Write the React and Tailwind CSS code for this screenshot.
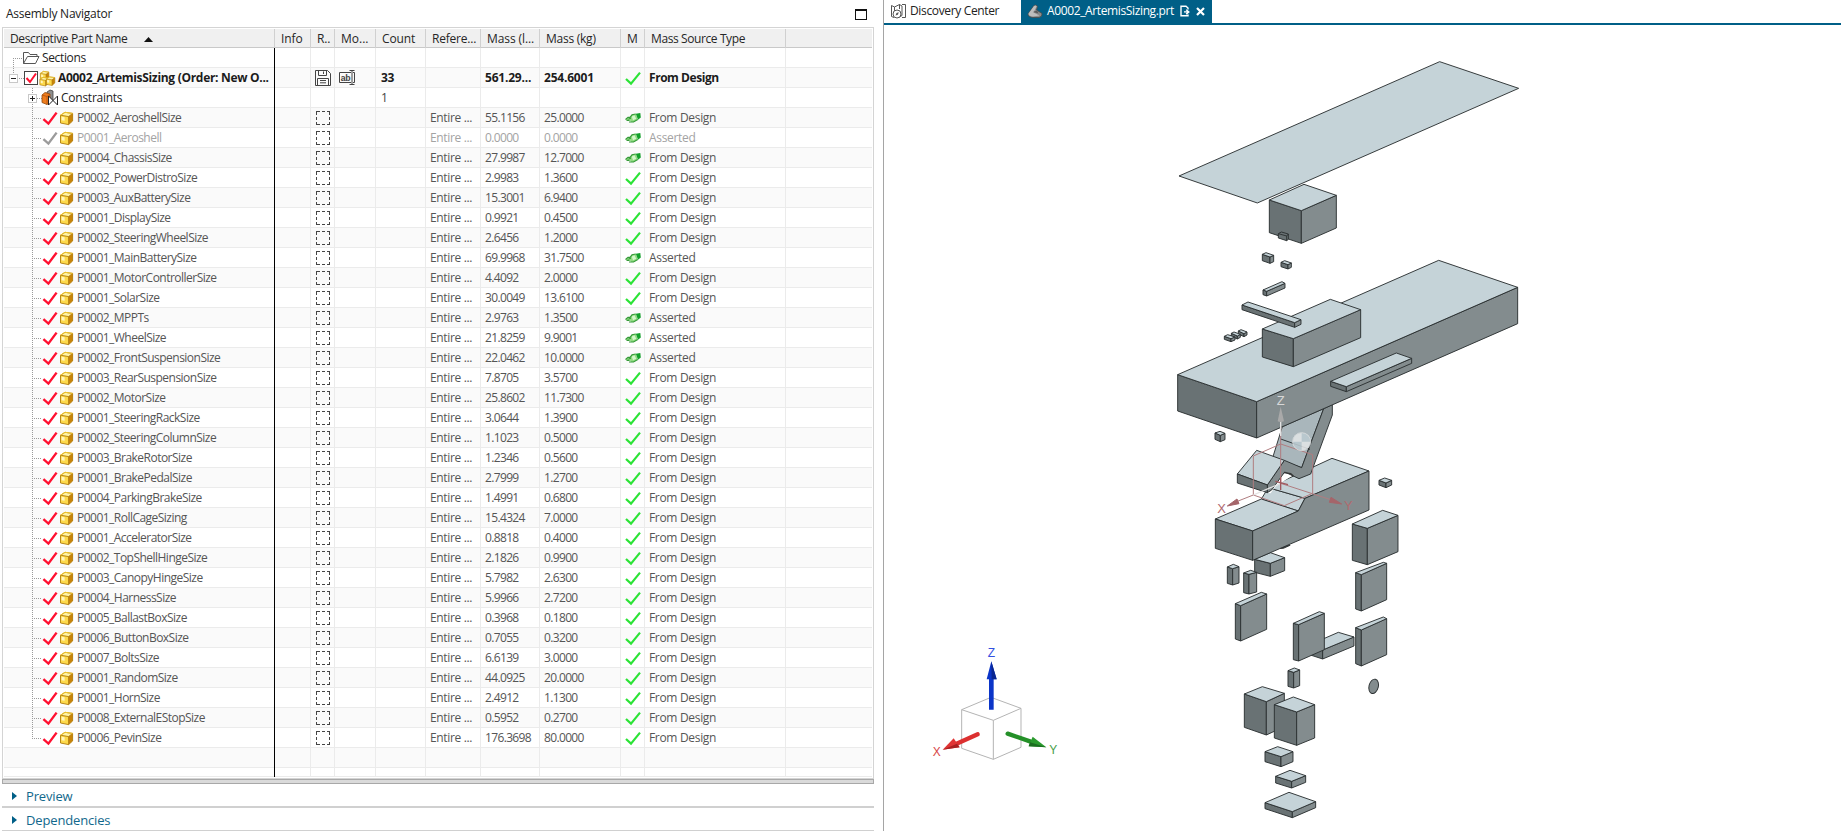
import React from "react";

const PARTS = [
  ["P0002_AeroshellSize", "55.1156", "25.0000", "h", "From Design"],
  ["P0001_Aeroshell", "0.0000", "0.0000", "h", "Asserted", true],
  ["P0004_ChassisSize", "27.9987", "12.7000", "h", "From Design"],
  ["P0002_PowerDistroSize", "2.9983", "1.3600", "c", "From Design"],
  ["P0003_AuxBatterySize", "15.3001", "6.9400", "c", "From Design"],
  ["P0001_DisplaySize", "0.9921", "0.4500", "c", "From Design"],
  ["P0002_SteeringWheelSize", "2.6456", "1.2000", "c", "From Design"],
  ["P0001_MainBatterySize", "69.9968", "31.7500", "h", "Asserted"],
  ["P0001_MotorControllerSize", "4.4092", "2.0000", "c", "From Design"],
  ["P0001_SolarSize", "30.0049", "13.6100", "c", "From Design"],
  ["P0002_MPPTs", "2.9763", "1.3500", "h", "Asserted"],
  ["P0001_WheelSize", "21.8259", "9.9001", "h", "Asserted"],
  ["P0002_FrontSuspensionSize", "22.0462", "10.0000", "h", "Asserted"],
  ["P0003_RearSuspensionSize", "7.8705", "3.5700", "c", "From Design"],
  ["P0002_MotorSize", "25.8602", "11.7300", "c", "From Design"],
  ["P0001_SteeringRackSize", "3.0644", "1.3900", "c", "From Design"],
  ["P0002_SteeringColumnSize", "1.1023", "0.5000", "c", "From Design"],
  ["P0003_BrakeRotorSize", "1.2346", "0.5600", "c", "From Design"],
  ["P0001_BrakePedalSize", "2.7999", "1.2700", "c", "From Design"],
  ["P0004_ParkingBrakeSize", "1.4991", "0.6800", "c", "From Design"],
  ["P0001_RollCageSizing", "15.4324", "7.0000", "c", "From Design"],
  ["P0001_AcceleratorSize", "0.8818", "0.4000", "c", "From Design"],
  ["P0002_TopShellHingeSize", "2.1826", "0.9900", "c", "From Design"],
  ["P0003_CanopyHingeSize", "5.7982", "2.6300", "c", "From Design"],
  ["P0004_HarnessSize", "5.9966", "2.7200", "c", "From Design"],
  ["P0005_BallastBoxSize", "0.3968", "0.1800", "c", "From Design"],
  ["P0006_ButtonBoxSize", "0.7055", "0.3200", "c", "From Design"],
  ["P0007_BoltsSize", "6.6139", "3.0000", "c", "From Design"],
  ["P0001_RandomSize", "44.0925", "20.0000", "c", "From Design"],
  ["P0001_HornSize", "2.4912", "1.1300", "c", "From Design"],
  ["P0008_ExternalEStopSize", "0.5952", "0.2700", "c", "From Design"],
  ["P0006_PevinSize", "176.3698", "80.0000", "c", "From Design"],
];

const GRID =
  "grid grid-cols-[271px_36px_24px_41px_50px_55px_59px_81px_24px_141px_86px]";

const Dots = (p) => (
  <path stroke="#9a9a9a" strokeDasharray="1 1" fill="none" shapeRendering="crispEdges" {...p} />
);

const Toggle = ({ x, plus }) => (
  <g shapeRendering="crispEdges">
    <rect x={x + 0.5} y="6.5" width="8" height="8" fill="#fff" stroke="#c8c8c8" />
    <path d={`M${x + 2} 10.5h5`} stroke="#222" />
    {plus && <path d={`M${x + 4.5} 8v5`} stroke="#222" />}
  </g>
);

const Cube = ({ x, y, s = 1 }) => (
  <g transform={`translate(${x} ${y}) scale(${s})`} strokeLinejoin="round">
    <path d="M.5 3.4 5 .5 12.6 1.6 8.6 4.8Z" fill="#fff3a6" />
    <path d="M.5 3.4 8.6 4.8V12.8L.5 11.2Z" fill="#fdd94a" />
    <path d="M8.6 4.8 12.6 1.6V9.2L8.6 12.8Z" fill="#c98408" />
    <path d="M1.6 5 4.600 5.500V9L1.600 8.500Z" fill="#fff6c0" />
    <path
      d="M.5 3.4 5 .5 12.6 1.6V9.2L8.6 12.8.5 11.2ZM.5 3.4 8.6 4.8 12.6 1.6M8.6 4.8v8"
      fill="none"
      stroke="#b07c08"
      strokeWidth=".9"
    />
    <path d="M.5 3.4 5 .5 12.6 1.6" fill="none" stroke="#f2c52c" strokeWidth="1" />
  </g>
);

const RedCheck = ({ gray }) => (
  <path
    d="M39.4 11.2 44.4 15.6 52.6 4.6"
    fill="none"
    stroke={gray ? "#9b9b9b" : "#ff1030"}
    strokeWidth="2.4"
  />
);

const GreenCheck = () => (
  <svg width="24" height="20">
    <path d="M5 11 10 15.6 19 4.6" fill="none" stroke="#2be336" strokeWidth="2.2" />
  </svg>
);

const GreenHand = () => (
  <svg width="24" height="20">
    <path d="M4.500 11.500 7 9.400H9L11 6.800 14.800 6 16.800 11.500 12.500 14H10L9 12.500 7.500 12.600Z" fill="#8fdc80" />
    <path d="M10.800 8.500 13.500 7.200 15.200 10.800 12 12.300Z" fill="#d4f7ca" />
    <path d="M14.800 5.800 19.300 5 19.800 9.600 17 11.800Z" fill="#12a02a" />
    <path d="M4.500 11.500 7 9.400H9L11 6.800 14.800 6M5.500 12.400H8.500M8 14H12.500L16.800 11.500" fill="none" stroke="#359a38" strokeWidth="1.100" />
    <path d="M7.500 11 10 10.200" stroke="#2f8f35" strokeWidth=".9" />
  </svg>
);

const DashBox = () => (
  <svg width="24" height="20" shapeRendering="crispEdges">
    <path
      d="M5.5 7V3.5H9M11 3.5h3M16 3.5h2.5V7M18.5 9v3M18.5 14v2.5H16M14 16.5h-3M9 16.5H5.5V14M5.5 12V9"
      fill="none"
      stroke="#444"
    />
  </svg>
);

const SaveIcon = () => (
  <svg width="24" height="20" fill="none" stroke="#444">
    <path d="M4.5 2.5h12l3 3v12h-15zM7.5 2.5v5h8v-5M12.5 3.5v2.5M6.5 17v-6.5h11V17M9 12.5h6M9 14.8h6" />
  </svg>
);

const RenameIcon = () => (
  <svg width="24" height="20" fill="none" stroke="#444">
    <path d="M16 4.5H4.500v10H16M18 4.500h1.500v10H18M14.500 2.500h5M17 2.500v14M14.500 16.500h5" />
    <text x="5.500" y="12.600" fontSize="9" fill="#444" stroke="none" fontFamily="Liberation Mono, monospace" letterSpacing="-.6">
      ab
    </text>
  </svg>
);

const Cell = ({ children, pad = "pl-[4px]", last }) => (
  <div
    className={`h-full overflow-hidden border-b border-[#ebebeb] whitespace-nowrap ${pad} ${last ? "" : "border-r"}`}
  >
    {children}
  </div>
);

const Row = ({ i, icon, name, nameClass = "", num = "tracking-[-0.65px]", info, mod, count, ref_, lb, kg, m, src, cls, h = "h-[20px]" }) => (
  <div className={`${GRID} ${h} overflow-hidden leading-[20px] ${i % 2 ? "bg-[#fafafa]" : "bg-white"} ${cls}`}>
    <div className="flex overflow-hidden border-r border-black">
      <div className="flex flex-1 items-start overflow-hidden border-b border-[#ebebeb] whitespace-nowrap">
        {icon}
        <span className={nameClass}>{name}</span>
      </div>
    </div>
    <Cell />
    <Cell pad="">{info}</Cell>
    <Cell pad="">{mod}</Cell>
    <Cell pad="pl-[5px]">{count}</Cell>
    <Cell><span className="tracking-[-0.35px]">{ref_}</span></Cell>
    <Cell><span className={num}>{lb}</span></Cell>
    <Cell><span className={num}>{kg}</span></Cell>
    <Cell pad="">{m}</Cell>
    <Cell>{src}</Cell>
    <Cell last />
  </div>
);

const HEADS = [
  ["Info", "tracking-[-0.1px]"],
  ["R..", "tracking-[-0.1px]"],
  ["Mo...", "tracking-normal"],
  ["Count", "tracking-[-0.1px]"],
  ["Refere...", "tracking-[-0.2px]"],
  ["Mass (l...", "tracking-[-0.1px]"],
  ["Mass (kg)", "tracking-[-0.25px]"],
  ["M", "tracking-normal"],
  ["Mass Source Type", "tracking-[-0.4px]"],
];

const Header = () => (
  <div className={`${GRID} h-[19px] border-b border-[#c9c9c9] bg-[#f0f0f0] leading-[20px] text-[#262626]`}>
    <div className="flex items-center border-r border-[#d0d0d0] pl-[6px]">
      <span className="w-[118px] tracking-[-0.37px] whitespace-nowrap">Descriptive Part Name</span>
      <svg width="9" height="5" className="ml-[16px]"><path d="M0 5 4.500 0 9 5Z" fill="#111" /></svg>
    </div>
    {HEADS.map(([t, p]) => (
      <div key={t} className={`overflow-hidden border-r border-[#d0d0d0] pl-[6px] whitespace-nowrap ${p}`}>{t}</div>
    ))}
    <div />
  </div>
);

const Navigator = () => (
  <section className="flex w-[883px] shrink-0 flex-col pl-[2px]">
    <div className="flex h-[27px] items-center justify-between pr-[15px] pl-[4px]">
      <span className="pt-px text-[12px] tracking-[-0.25px] text-[#222]">Assembly Navigator</span>
      <svg width="12" height="11" className="mr-px mt-[2px]" shapeRendering="crispEdges">
        <path d="M.5 1v9.500h11V1" fill="none" stroke="#111" />
        <path d="M0 1h12" stroke="#111" strokeWidth="2" />
      </svg>
    </div>
    <div className="flex h-[752px] w-[872px] flex-col border border-[#d4d4d4] px-px pt-px text-[12px]">
      <Header />
      <Row
        i={0}
        cls="text-[#222]"
        name="Sections"
        nameClass="tracking-[-0.35px]"
        icon={
          <svg width="38" height="20" className="shrink-0">
            <Dots d="M9.500 10v10M9 10.500h9" />
            <path d="M19.500 15.500V4.500h5l1.500 2h7v2M19.500 15.500l4-7h11.500l-3.500 7z" fill="none" stroke="#555" />
          </svg>
        }
      />
      <Row
        i={1}
        cls="font-bold text-[#1c1c1c]"
        name="A0002_ArtemisSizing (Order: New O..."
        nameClass="tracking-[-0.3px]"
        num="tracking-[-0.2px]"
        icon={
          <svg width="54" height="20" className="shrink-0">
            <Dots d="M9.500 0v6M15 10.500h5" />
            <Toggle x={5} />
            <rect x="20.500" y="3.500" width="13" height="13" fill="#fff" stroke="#444" />
            <path d="M22.500 10 26 14 32 5.500" fill="none" stroke="#ff1030" strokeWidth="2" />
            <Cube x={36} y={3} s={0.7} />
            <Cube x={35.500} y={9} s={0.7} />
            <Cube x={42} y={8.500} s={0.7} />
          </svg>
        }
        info={<SaveIcon />}
        mod={<RenameIcon />}
        count={<span className="tracking-[-0.4px]">33</span>}
        lb="561.29..."
        kg="254.6001"
        m={<GreenCheck />}
        src={<span className="tracking-[-0.45px]">From Design</span>}
      />
      <Row
        i={2}
        cls="text-[#222]"
        name="Constraints"
        nameClass="tracking-[-0.25px]"
        icon={
          <svg width="57" height="20" className="shrink-0">
            <Dots d="M28.500 0v20M33 10.500h5" />
            <Toggle x={24} plus />
            <path d="M43 4 46 2 49 3V12l-3 3-3-2z" fill="#8d8d8d" stroke="#444" strokeWidth=".8" />
            <path d="M38 7 41 4.500 46 6V14l-3 2.500-5-2z" fill="#ef7d1d" stroke="#8e4a10" strokeWidth=".8" />
            <path d="M38 7 43 8.500 46 6M43 8.500v8" fill="none" stroke="#b4520c" strokeWidth=".8" />
            <path d="M44.500 8 53.500 17V8L44.500 17Z" fill="#fff" stroke="#222" />
          </svg>
        }
        count={<span className="text-[#444]">1</span>}
      />
      {PARTS.map(([name, lb, kg, m, src, off], k) => (
        <Row
          key={name}
          i={k + 3}
          cls={off ? "text-[#a3a3a3]" : "text-[#555]"}
          name={name}
          nameClass="tracking-[-0.52px]"
          icon={
            <svg width="73" height="20" className="shrink-0">
              <Dots d={k === PARTS.length - 1 ? "M28.500 0v10M28 10.500h10" : "M28.500 0v20M28 10.500h10"} />
              <RedCheck gray={off} />
              <Cube x={56} y={3.800} />
            </svg>
          }
          info={<DashBox />}
          ref_="Entire ..."
          lb={lb}
          kg={kg}
          m={m === "h" ? <GreenHand /> : <GreenCheck />}
          src={<span className="tracking-[-0.32px]">{src}</span>}
        />
      ))}
      <Row i={35} cls="" />
      <Row i={36} cls="" h="h-[9px]" />
    </div>
    <div className="h-[5px] w-[872px] border border-[#a8a8a8] bg-[#dadada]" />
    {["Preview", "Dependencies"].map((t, k) => (
      <div
        key={t}
        className={`flex w-[872px] items-center border-[#d0d0d0] pt-[2px] pl-[10px] text-[13px] leading-[20px] tracking-[-0.15px] text-[#11688c] ${k ? "h-[23px] border-b" : "h-[24px] border-b-2"}`}
      >
        <svg width="5" height="8" className="mr-[9px]"><path d="M0 0 5 4 0 8Z" fill="#005f87" /></svg>
        {t}
      </div>
    ))}
  </section>
);

const EDGE = { stroke: "#2a2f30", strokeWidth: 2.8, strokeLinejoin: "round" };
const pts = (a) => a.map((p) => p.join(",")).join(" ");
const Poly = ({ p, fill }) => <polygon points={p} fill={fill} {...EDGE} />;

// Isometric block from its four top corners (left, back, right, front) and a height.
const Block = ({ c, h }) => {
  const [lx, ly, bx, by, rx, ry, fx, fy] = c;
  return (
    <g>
      <Poly p={pts([[lx, ly], [fx, fy], [fx, fy + h], [lx, ly + h]])} fill="#697274" />
      <Poly p={pts([[fx, fy], [rx, ry], [rx, ry + h], [fx, fy + h]])} fill="#838c8e" />
      <Poly p={pts([[lx, ly], [bx, by], [rx, ry], [fx, fy]])} fill="#c5d3d8" />
    </g>
  );
};

const Blocks = ({ list }) => list.map(([c, h], i) => <Block key={i} c={c} h={h} />);
const At = ({ x, y, children }) => (
  <g transform={`translate(${x} ${y}) scale(0.33333)`}>{children}</g>
);

const Model = () => (
  <g>
    <At x={1160} y={50}>
      <Block c={[328, 450, 432, 403, 529, 436, 424, 482]} h={98} />
      <Poly p="57,378 839,35 1076,115 292,459" fill="#c5d3d8" />
      <Poly p="355,551 364,546 385,552 385,568 380,572 355,564" fill="#697274" />
      <path d="M355 551 380 558 385 552M380 558V572" fill="none" {...EDGE} />
    </At>
    <At x={1200} y={500}>
      <Poly p="240,145 268,134 270,136 250,145" fill="#333" />
      <Block c={[164, 178, 211, 158, 254, 173, 211, 190]} h={39} />
    </At>
    <At x={1160} y={390}>
      <Poly p="304,327 325,293 435,325 415,363" fill="#c5d3d8" />
      <Poly p="325,293 516,205 627,243 435,325" fill="#c5d3d8" />
      <Poly p="166,387 304,327 415,363 278,423" fill="#c5d3d8" />
      <Poly p="166,387 278,423 278,511 166,475" fill="#697274" />
      <Poly p="278,423 415,363 435,325 627,243 627,360 278,511" fill="#838c8e" />
      <polygon points="322,308 372,248 400,254 345,291 332,310 312,308" fill="#fff" />
      <Poly p="367,110 491,56 425,233 338,203" fill="#a9b6bb" />
      <Poly p="491,56 517,44 517,75 452,252 417,266 374,246 335,300 322,308 322,285 373,211 425,233" fill="#838c8e" />
      <path d="M362 147 450 178" fill="none" {...EDGE} />
      <Poly p="290,181 373,211 322,285 232,252" fill="#c5d3d8" />
      <Poly p="232,252 322,285 322,308 232,279" fill="#697274" />
      <path d="M372 248 392 251 400 258" fill="none" stroke="#333" strokeWidth="4" />
    </At>
    <At x={1160} y={240}>
      <Blocks
        list={[
          [[53, 404, 836, 61, 1073, 142, 290, 485], 109],
          [[307, 267, 511, 178, 602, 209, 400, 296], 84],
          [[246, 195, 264, 186, 423, 239, 404, 248], 14],
          [[512, 424, 709, 339, 755, 355, 559, 440], 15],
          [[307, 43, 318, 38, 341, 46, 330, 51], 19],
          [[363, 67, 374, 62, 394, 69, 384, 74], 13],
          [[309, 150, 366, 125, 375, 130, 320, 154], 14],
          [[235, 273, 243, 269, 261, 276, 252, 281], 9],
          [[214, 280, 222, 276, 241, 283, 232, 288], 9],
          [[193, 289, 203, 284, 225, 291, 213, 296], 9],
        ]}
      />
    </At>
    <At x={1160} y={390}>
      <Blocks
        list={[
          [[165, 129, 180, 124, 195, 130, 181, 136], 19],
          [[657, 271, 674, 264, 695, 271, 678, 279], 14],
        ]}
      />
      <g fill="none" stroke="#b07c80" strokeWidth="3">
        <path d="M280 198 362 162 458 194V310L373 347 280 315Z" />
        <path d="M362 110V280M280 315 232 334M362 280 512 329" />
      </g>
      <path d="M362 280 280 315M362 90v48" stroke="#e3e3e3" strokeWidth="4" />
      <path d="M362 262V300M346 274 384 284" stroke="#a0585d" strokeWidth="4" />
      <path d="M362 50 353 94Q362 98 372 94Z" fill="#a9a9a9" />
      <path d="M202 348 231 327 237 341Z" fill="#a5656a" stroke="#a5656a" strokeWidth="3" />
      <path d="M545 342 513 322 508 337Z" fill="#a5656a" stroke="#a5656a" strokeWidth="3" />
      <g opacity=".88">
        <circle cx="425" cy="155" r="27" fill="#e3e6e7" />
        <path d="M425 155V128A27 27 0 0 1 452 155ZM425 155V182A27 27 0 0 1 398 155Z" fill="#bccbd1" />
        <circle cx="425" cy="155" r="27" fill="none" stroke="#d8dcdd" strokeWidth="3" />
      </g>
      <g fontFamily="Liberation Sans, sans-serif" fontSize="39" textAnchor="middle">
        <text x="362" y="44" fill="#d8d8d8">Z</text>
        <text x="185" y="369" fill="#b06a6f">X</text>
        <text x="565" y="360" fill="#b06a6f">Y</text>
      </g>
    </At>
    <At x={1200} y={500}>
      <Blocks
        list={[
          [[457, 72, 548, 31, 594, 46, 502, 85], 109],
          [[82, 201, 100, 193, 117, 200, 98, 206], 49],
          [[131, 219, 152, 211, 170, 217, 147, 223], 59],
          [[106, 311, 184, 277, 200, 282, 122, 317], 106],
          [[467, 218, 550, 187, 560, 190, 484, 224], 109],
          [[467, 383, 550, 351, 560, 356, 484, 390], 108],
          [[325, 436, 415, 397, 462, 411, 368, 450], 27],
          [[280, 370, 358, 335, 373, 340, 296, 374], 109],
        ]}
      />
    </At>
    <At x={1200} y={650}>
      <Blocks
        list={[
          [[264, 62, 283, 54, 299, 60, 281, 67], 47],
          [[133, 132, 187, 110, 253, 130, 199, 155], 100],
          [[223, 164, 280, 141, 344, 164, 290, 186], 100],
          [[195, 305, 233, 290, 279, 305, 243, 320], 30],
          [[227, 379, 270, 361, 317, 377, 275, 394], 20],
          [[195, 458, 267, 427, 347, 455, 277, 485], 18],
        ]}
      />
      <ellipse cx="521" cy="109" rx="14" ry="22" transform="rotate(14 521 109)" fill="#838c8e" {...EDGE} />
    </At>
  </g>
);

const Triad = () => (
  <At x={920} y={640}>
    <path
      d="M125 209 213 172 303 205 220 241ZM125 209V325L220 358 303 322V205M220 241V358"
      fill="none"
      stroke="#b4b4b4"
      strokeWidth="3"
    />
    <path d="M207 209V118H200L214 64 230 118H221V209Z" fill="#0b35c8" />
    <path d="M214 64 230 118H215Z" fill="#0a2690" />
    <path d="M173 283 108 312" stroke="#dc3030" strokeWidth="13" strokeLinecap="round" />
    <path d="M68 329 101 295 119 322Z" fill="#e03434" />
    <path d="M68 329 111 311 119 322Z" fill="#a82020" />
    <path d="M263 281 332 305" stroke="#249028" strokeWidth="13" strokeLinecap="round" />
    <path d="M379 322 338 290 326 319Z" fill="#2a9a2e" />
    <path d="M379 322 330 307 326 319Z" fill="#1b6e20" />
    <g fontFamily="Liberation Sans, sans-serif" fontSize="36" textAnchor="middle">
      <text x="214" y="50" fill="#3350e0">Z</text>
      <text x="50" y="349" fill="#d84848">X</text>
      <text x="400" y="342" fill="#48a04c">Y</text>
    </g>
  </At>
);

const Viewport = () => (
  <main className="flex min-w-0 flex-1 flex-col border-l border-[#a5a5a5]">
    <div className="flex h-[25px] border-b-2 border-[#005f87] text-[12px] leading-[22px]">
      <div className="flex h-[22px] w-[137px] items-center pl-[6px] text-[#222]">
        <svg width="17" height="17" viewBox="0 0 17 17" fill="none" stroke="#555" className="mr-[3px] shrink-0">
          <path d="M1.500 2.500 4.500 4 9.500 1.500 12 3V12.500L9.500 14M1.500 2.500V13.500L4 14.500M4.500 4V8M9.500 1.500V6M12 1.500h3.500v13H12" />
          <circle cx="7" cy="11" r="4" fill="#fff" />
          <path d="M5.500 12.500 6.500 10 8.800 9.300 7.800 11.800Z" fill="#555" stroke="none" />
        </svg>
        <span className="tracking-[-0.35px]">Discovery Center</span>
      </div>
      <div className="flex w-[191px] items-start bg-[#005f87] text-white">
        <div className="flex h-[22px] items-center pl-[6px]">
          <svg width="16" height="15" viewBox="0 0 16 15" className="mr-[4px] shrink-0">
            <path d="M1 10 7 1.500Q9.500 0 10.500 2.500L9.500 6 15 9.500Q15.500 12.500 12 13.500L6 13.500Q1 13 1 10Z" fill="#8c8c8c" stroke="#4a4a4a" strokeWidth=".8" />
            <path d="M1.500 9.500 7 2Q9 1 9.500 2.500L6.500 8.500 12.500 11.500 6 12.500Q1.500 12 1.500 9.500Z" fill="#bdbdbd" />
            <path d="M6 8 10 6.500 11.500 9.500Z" fill="#5a5a5a" />
          </svg>
          <span className="w-[128px] shrink-0 tracking-[-0.37px] whitespace-nowrap">A0002_ArtemisSizing.prt</span>
          <svg width="10" height="12" viewBox="0 0 10 12" className="ml-[5px] shrink-0" fill="none" stroke="#fff" strokeWidth="1.400">
            <path d="M8 4.500V3L6 1.200H1v9.600h7V9.500M4 6.900h4M6.200 4.700 8.800 6.900 6.200 9.100" />
          </svg>
          <svg width="9" height="9" viewBox="0 0 9 9" className="ml-[6px] shrink-0" stroke="#fff" strokeWidth="2.200">
            <path d="M1 1 8 8M8 1 1 8" />
          </svg>
        </div>
      </div>
    </div>
    <svg viewBox="884 25 957 806" width="957" height="806" className="block">
      <Model />
      <Triad />
    </svg>
  </main>
);

export default function App() {
  return (
    <div className="flex h-[831px] w-[1841px] overflow-hidden bg-white font-['Open_Sans','Noto_Sans',sans-serif]">
      <Navigator />
      <Viewport />
    </div>
  );
}
